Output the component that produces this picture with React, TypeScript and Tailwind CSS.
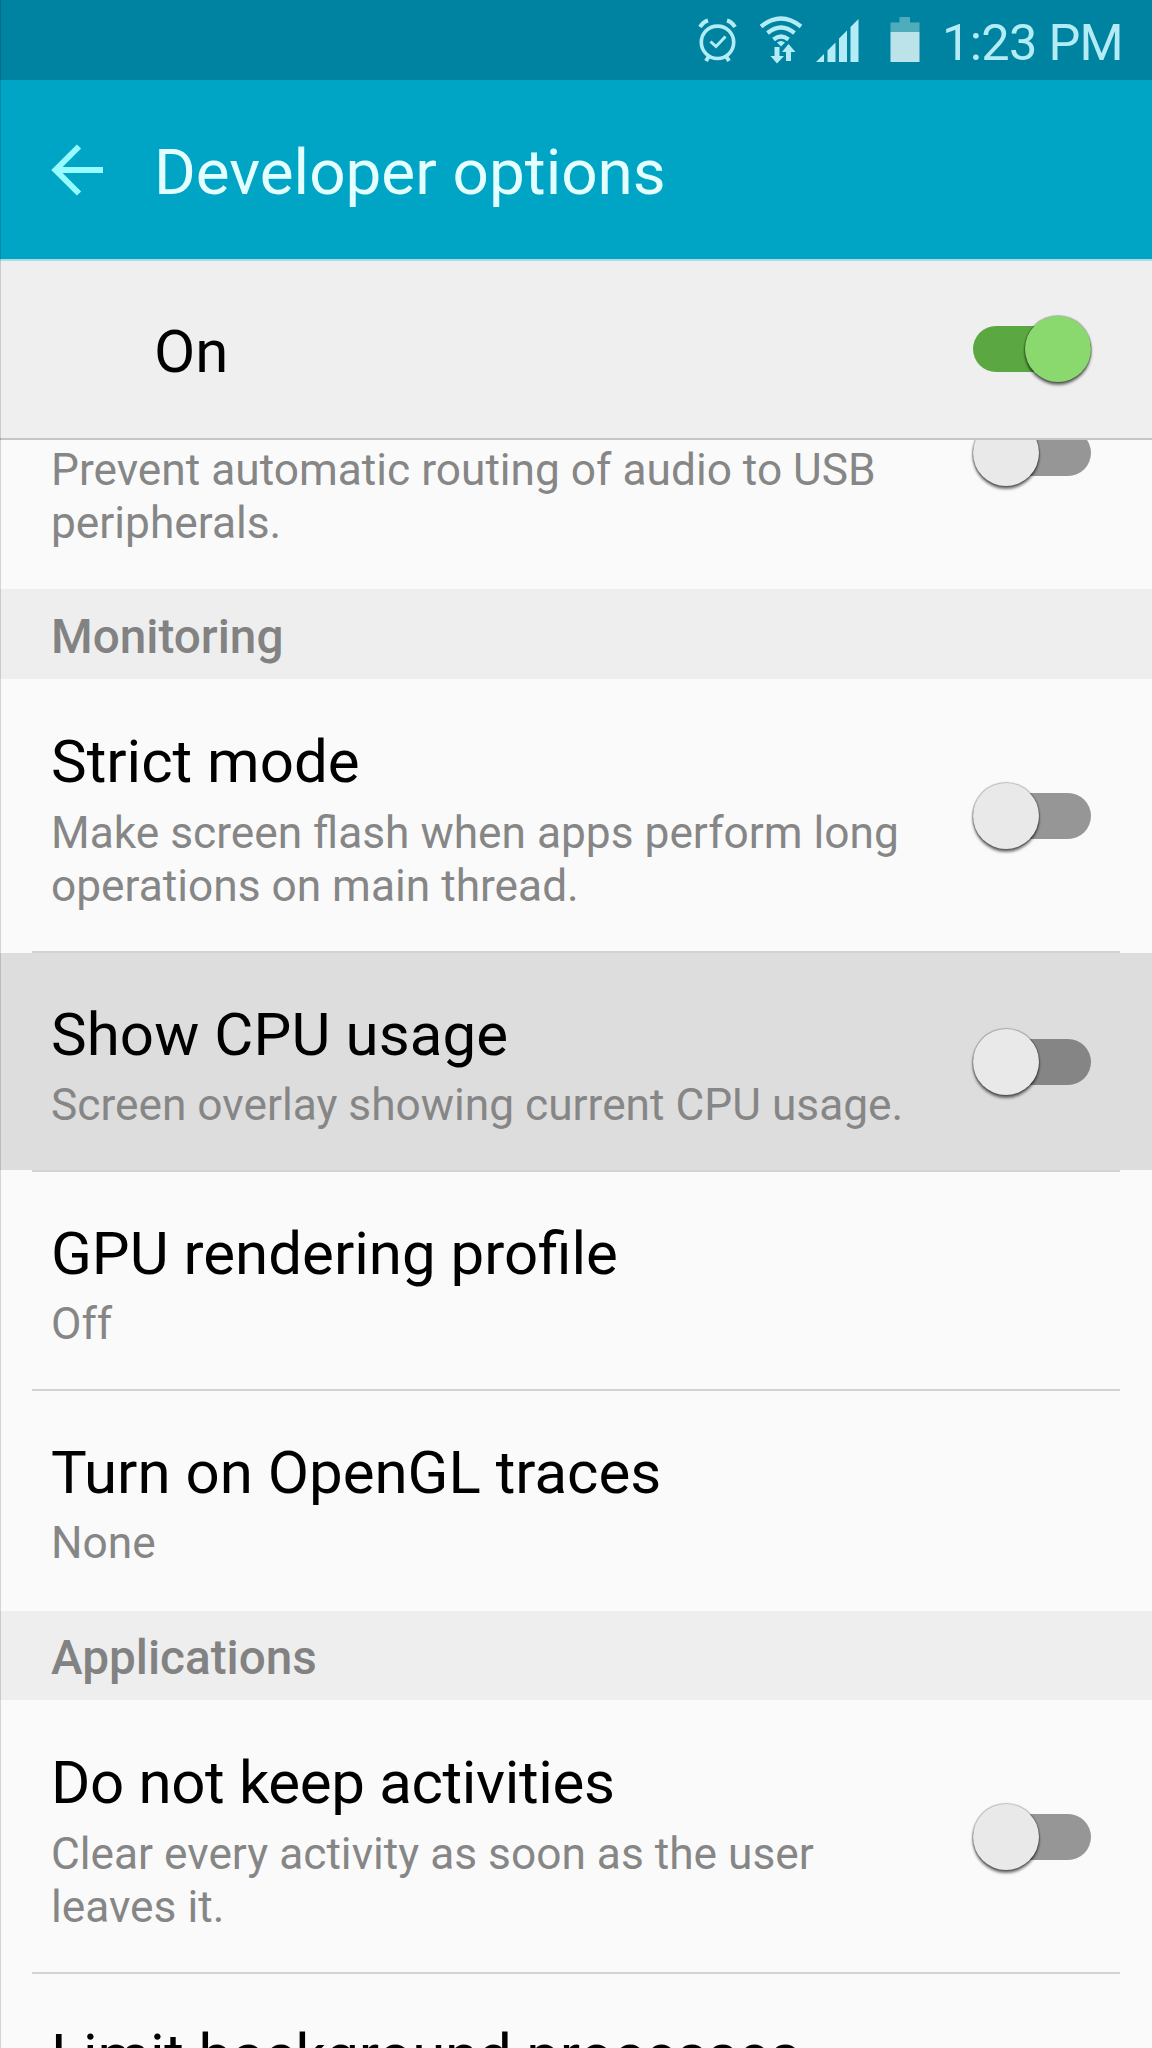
import type { ReactNode } from 'react'

function Switch({ on = false, pressed = false }: { on?: boolean; pressed?: boolean }) {
  const track = on ? 'bg-[#5ba842]' : pressed ? 'bg-[#858585]' : 'bg-[#969696]'
  return (
    <div className={`flex h-[46px] w-[118px] shrink-0 items-center rounded-full ${track} ${on ? 'justify-end' : 'justify-start'}`}>
      <div
        className={`size-[66px] shrink-0 rounded-full shadow-[0_3px_3px_0px_rgba(0,0,0,0.55),0_0_1px_1px_rgba(0,0,0,0.25)] ${
          on ? 'bg-[#8ad96f]' : 'bg-[#e9e9e9]'
        }`}
      />
    </div>
  )
}

function Section({ children, height }: { children: ReactNode; height: string }) {
  return (
    <h2 className={`flex shrink-0 items-center bg-[#eeeeee] pl-[51px] pt-[5px] text-[47.7px] font-medium leading-[56px] text-[#828282] ${height}`}>
      {children}
    </h2>
  )
}

type RowProps = {
  title: string
  lines?: string[]
  toggle?: boolean
  pressed?: boolean
  height: string
  // rows that open a section sit slightly lower than the ones after a divider
  first?: boolean
  tracking?: string
}

function Row({ title, lines = [], toggle, pressed, height, first, tracking = '' }: RowProps) {
  return (
    <div className={`flex shrink-0 items-center justify-between pl-[51px] pr-[61px] ${height} ${pressed ? 'bg-[#dddddd]' : ''}`}>
      <div className={`self-start whitespace-nowrap ${first ? 'pt-[48px]' : 'pt-[47px]'}`}>
        <p className={`text-[60px] leading-[70px] text-black ${tracking}`}>{title}</p>
        <div className={`text-[44.25px] leading-[52.5px] text-[#868686] ${first ? 'mt-[10px]' : 'mt-[9px]'}`}>
          {lines.map((line) => (
            <p key={line}>{line}</p>
          ))}
        </div>
      </div>
      {toggle && (
        <div className={first ? 'pt-[2px]' : ''}>
          <Switch pressed={pressed} />
        </div>
      )}
    </div>
  )
}

function Divider() {
  return <div className="mx-8 h-[2px] shrink-0 bg-[#d2d2d2]" />
}

function StatusIcons() {
  return (
    <svg className="h-[80px] w-[240px] shrink-0" viewBox="680 0 240 80" fill="none" stroke="#b4ecf6">
      {/* alarm */}
      <circle cx="717.5" cy="42.3" r="16.2" strokeWidth="3.6" />
      <path d="M710.5 41.5l5.5 5 9.5-10" strokeWidth="3" />
      <path d="M700 27q3-5 8-6.500M735 27q-3-5-8-6.500" strokeWidth="4" />
      <path d="M709 56l-3 5M726 56l3 5" strokeWidth="4" />
      {/* wifi */}
      <path d="M761 26.500q20-16 40 0M767.500 33q13.500-11 27 0M773.500 39.500q7.500-6 15 0" strokeWidth="4.200" />
      <path d="M777 42.500q4-3 8 0l-4 4z" fill="#b4ecf6" stroke="none" />
      <path d="M774.500 47h5v9h4.500l-7 7.500-6.500-7.500h4zM786 61h5v-9h4.500l-7-8-6.500 8h4z" fill="#b4ecf6" stroke="none" />
      {/* signal */}
      <path
        d="M816 62l8-8v8zM827.500 62v-11.500l8-8v19.500zM839 62v-23.500l8-8v31.500zM850.500 62v-35l8-8v43z"
        fill="#b4ecf6"
        stroke="none"
      />
      {/* battery */}
      <path d="M890.500 32v-9.500h9v-5.500h10.500v5.500h9.500v9.500z" fill="#4fadbb" stroke="none" />
      <path d="M890.500 32h29v30h-29z" fill="#bce3e9" stroke="none" />
    </svg>
  )
}

export default function App() {
  return (
    <div className="relative flex h-[2048px] w-[1152px] flex-col overflow-hidden bg-[#fafafa] font-['Roboto',sans-serif]">
      <div className="flex h-[80px] shrink-0 items-center bg-[#0083a0] pl-[680px]">
        <StatusIcons />
        <span className="ml-[22px] whitespace-nowrap pt-[6px] text-[50.5px] leading-[60px] tracking-[-0.7px] text-[#b4ecf6]">1:23 PM</span>
      </div>

      <header className="flex h-[179px] shrink-0 items-center bg-[#00a5c5] pl-[50px]">
        <svg className="h-[52px] w-[54px]" viewBox="0 0 54 52" fill="none" stroke="#96fcff" strokeWidth="6">
          <path d="M29 2.500L5.500 26 29 49.500M6 26h47" />
        </svg>
        <h1 className="ml-[50px] pt-[6px] text-[63.8px] leading-[76px] text-[#e3ffff]">Developer options</h1>
      </header>

      <div className="flex h-[181px] shrink-0 items-center justify-between border-t-2 border-b-2 border-t-[#a8dce6] border-b-[#c4c4c4] bg-[#efefef] pl-[154px] pr-[61px]">
        <span className="pt-[4px] text-[60px] leading-[70px] text-black">On</span>
        <div className="pb-[2px]">
          <Switch on />
        </div>
      </div>

      <div className="flex h-[149px] shrink-0 items-start justify-between overflow-hidden pl-[51px] pr-[61px]">
        <p className="whitespace-nowrap pt-[4px] text-[44.25px] leading-[52.5px] text-[#868686]">
          Prevent automatic routing of audio to USB
          <br />
          peripherals.
        </p>
        <div className="-mt-[10px]">
          <Switch />
        </div>
      </div>

      <Section height="h-[90px]">Monitoring</Section>
      <Row
        title="Strict mode"
        lines={['Make screen flash when apps perform long', 'operations on main thread.']}
        toggle
        first
        height="h-[272px]"
      />
      <Divider />
      <Row
        title="Show CPU usage"
        lines={['Screen overlay showing current CPU usage.']}
        toggle
        pressed
        height="h-[217px]"
        tracking="tracking-[0.1px]"
      />
      <Divider />
      <Row title="GPU rendering profile" lines={['Off']} height="h-[217px]" />
      <Divider />
      <Row title="Turn on OpenGL traces" lines={['None']} height="h-[220px]" />

      <Section height="h-[89px]">Applications</Section>
      <Row
        title="Do not keep activities"
        lines={['Clear every activity as soon as the user', 'leaves it.']}
        toggle
        first
        height="h-[272px]"
        tracking="tracking-[-0.35px]"
      />
      <Divider />
      <Row title="Limit background processes" height="h-[217px]" tracking="tracking-[-0.2px]" />

      {/* hairline down the left edge of the screen */}
      <div className="absolute inset-y-0 left-0 w-px bg-black/15" />
    </div>
  )
}
